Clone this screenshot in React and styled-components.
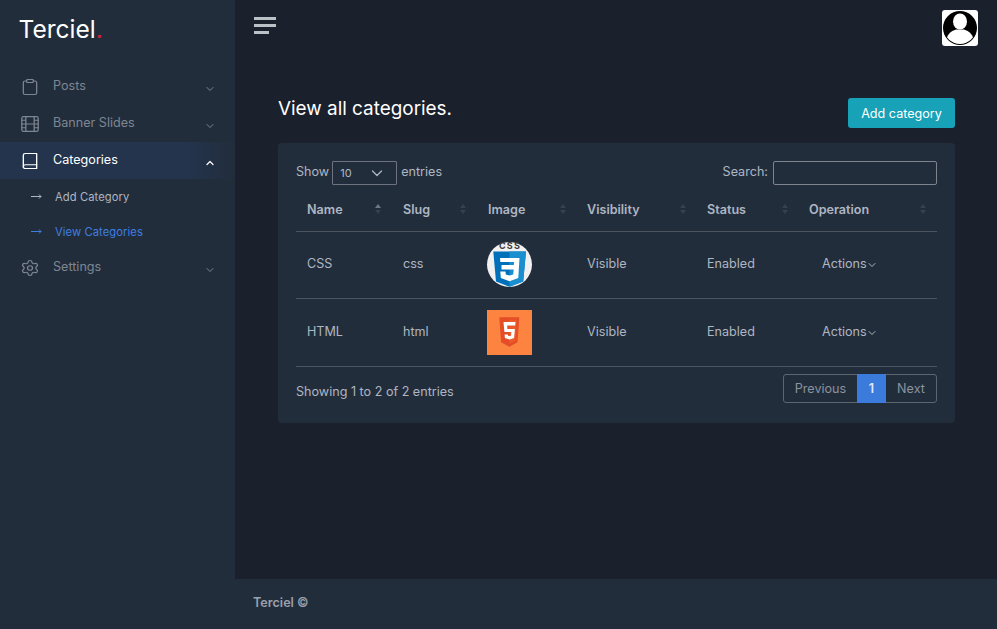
import React from "react";
import styled, { createGlobalStyle } from "styled-components";
import { Settings } from "lucide-react";

const Global = createGlobalStyle`
  html, body { margin: 0; padding: 0; height: 100%; background: #1a212d; }
  body { font-family: Inter, "Liberation Sans", sans-serif; font-size: 12.6px; color: #aeb6c2; overflow: hidden; }
  * { box-sizing: border-box; }
`;

const Shell = styled.div`display: flex; height: 629px; width: 997px;`;
const Sidebar = styled.aside`width: 235px; flex: none; background: #222d3c; display: flex; flex-direction: column;`;
const Logo = styled.div`
  height: 60px; padding: 13px 0 0 18.5px; font-size: 24.5px; line-height: 32px; color: #fff;
  span { color: #d0223f; }
`;
const Menu = styled.nav`display: flex; flex-direction: column; padding-top: 8px;`;
const MenuItem = styled.div`
  height: 37px; display: flex; align-items: center; padding: 0 21px 2px 20px; gap: 13px;
  font-size: 12.6px; color: ${p => (p.$active ? "#fff" : "#7e8691")};
  background: ${p => (p.$active ? "linear-gradient(90deg, #23344c 0%, #23344c 80%, #222d3c 100%)" : "transparent")};
  svg.main { width: 20px; height: 18px; flex: none; margin-top: 2px; }
`;
const Label = styled.span`flex: 1;`;
const Caret = styled.svg`width: 8px; height: 8px; margin-top: 7px; flex: none;`;
const ActionCaret = styled(Caret)`margin-top: 2px;`;
const SubItem = styled.div`
  height: 35px; display: flex; align-items: center; padding: 0 0 0 31px; gap: 13px;
  font-size: 11.2px; letter-spacing: .08px; color: ${p => (p.$active ? "#3f7ee0" : "#aeb6c2")};
`;
const Main = styled.div`flex: 1; display: flex; flex-direction: column; min-width: 0;`;
const TopBar = styled.header`height: 54px; flex: none; display: flex; align-items: center; justify-content: space-between; padding: 0 19px 0 19px;`;
const Burger = styled.div`
  width: 22px; display: flex; flex-direction: column; gap: 4.5px; margin-top: -3px;
  i { display: block; height: 2.5px; background: #bcc0c7; }
  i:last-child { width: 15px; }
`;
const Avatar = styled.div`width: 36px; height: 36px; border-radius: 3px; background: #fff; margin-top: 1px; padding: 1px; svg { display: block; }`;
const Content = styled.main`flex: 1; padding: 44px 42px 0 43px;`;
const TitleRow = styled.div`display: flex; justify-content: space-between; align-items: flex-start; height: 45px;`;
const Title = styled.h1`margin: 0; font-size: 18.9px; line-height: 22px; font-weight: 400; color: #fff;`;
const PrimaryButton = styled.button`
  width: 107px; height: 30px; border: 0; border-radius: 3px; background: #17a2b8; color: #fff;
  font: 400 12.6px Inter, sans-serif; padding: 0;
`;
const Card = styled.section`background: #222d3c; border-radius: 4px; padding: 18px 18px 20px; height: 280px;`;
const Controls = styled.div`display: flex; justify-content: space-between; align-items: flex-start; height: 24px; line-height: 22px;`;
const Field = styled.label`display: flex; align-items: flex-start; gap: 3px;`;
const FakeSelect = styled.div`
  width: 65px; height: 24px; border: 1px solid #6d7480; display: flex; align-items: center; justify-content: space-between;
  padding: 0 13px 1px 7px; margin-right: 1px; font-size: 11px; border-radius: 1px;
`;
const SearchBox = styled.div`width: 164px; height: 24px; border: 1px solid #7d848e; border-radius: 2px; margin-left: 2px;`;
const Table = styled.table`width: 641px; table-layout: fixed; border-collapse: collapse; margin-top: 2px;`;
const Th = styled.th`
  height: 44px; padding: 2px 11px 0 ${p => p.$pl}px; text-align: left; font-size: 12.6px; font-weight: 600; color: #aeb6c2;
  border-bottom: 1px solid #4c5560; width: ${p => p.$w}px;
`;
const ThInner = styled.div`display: flex; justify-content: space-between; align-items: center;`;
const Sort = styled.span`
  display: flex; flex-direction: column; gap: 2px; margin-top: -2px;
  i { display: block; width: 0; height: 0; border: 3px solid transparent; border-top-width: 0; border-bottom: 4px solid #36404e; }
  i:last-child { border-bottom: 0; border-top: 4px solid #36404e; }
  &[data-on] i:first-child { border-bottom-color: #6f7783; }
`;
const Td = styled.td`
  padding: ${p => p.$pt}px 10px ${p => p.$pb}px ${p => p.$pl ?? 10}px; line-height: 20px; color: #aeb6c2; border-bottom: 1px solid #4c5560;
  svg { display: block; }
`;
const Actions = styled.span`display: inline-flex; align-items: center; gap: 1px; margin-left: 13px;`;
const Footerline = styled.div`display: flex; justify-content: space-between; align-items: flex-start; margin-top: 7px;`;
const Entries = styled.span`margin-top: 10px;`;
const Pager = styled.div`display: flex; height: 29px; border: 1px solid #5c6570; border-radius: 3px; align-items: stretch; color: #8a929d;`;
const Page = styled.span`
  display: flex; align-items: center; justify-content: center; width: ${p => p.$w}px;
  ${p => p.$on && "background:#3a7bdc;color:#dfe8f6;font-weight:600;margin:-1px 0;"}
`;
const Foot = styled.footer`height: 50px; flex: none; background: #222d3c; display: flex; align-items: center; padding: 0 18px 3px; font-weight: 600; font-size: 12.6px; color: #99a1ad;`;

const stroke = { fill: "none", stroke: "currentColor", strokeWidth: 2, strokeLinecap: "round", strokeLinejoin: "round" };
const Clip = () => <svg className="main" viewBox="0 0 24 24" preserveAspectRatio="none" {...stroke} strokeWidth="1.5"><path d="M16 4h2a2 2 0 0 1 2 2v14a2 2 0 0 1-2 2H6a2 2 0 0 1-2-2V6a2 2 0 0 1 2-2h2"/><rect x="8" y="2" width="8" height="4" rx="1"/></svg>;
const Film = () => <svg className="main" viewBox="0 0 24 24" preserveAspectRatio="none" {...stroke} strokeWidth="1.5"><rect x="2.18" y="2.18" width="19.64" height="19.64" rx="2.18"/><path d="M7 2v20M17 2v20M2 12h20M2 7h5M2 17h5M17 17h5M17 7h5"/></svg>;
const Book = () => <svg className="main" viewBox="0 0 24 24" preserveAspectRatio="none" {...stroke} strokeWidth="1.6"><path d="M4 19.5A2.5 2.5 0 0 1 6.5 17H20"/><path d="M6.5 2H20v20H6.5A2.5 2.5 0 0 1 4 19.5v-15A2.5 2.5 0 0 1 6.5 2z"/></svg>;
const Arrow = () => <svg width="11" height="7" viewBox="0 0 11 7" fill="none" stroke="currentColor" strokeWidth="1"><path d="M0 3.5h10M8 1.5l2 2-2 2"/></svg>;
const Down = () => <Caret viewBox="0 0 8 8" {...stroke} strokeWidth="1"><path d="M1 2.5l3 3 3-3"/></Caret>;
const Up = () => <Caret viewBox="0 0 8 8" {...stroke} strokeWidth="1.2"><path d="M1 5.5l3-3 3 3"/></Caret>;

const CssLogo = () => (
  <svg width="45" height="45" viewBox="0 0 45 45" overflow="visible">
    <circle cx="22.5" cy="22.5" r="22.5" fill="#f1f1f1" />
    <path d="M6.300 9.500h32.700l-2.800 30-13.700 5.200-13.500-5.200z" fill="#0170ba" />
    <path d="M22.500 9.500H39l-2.800 30-13.700 5.200z" fill="#1b8ed0" />
    <path d="M13 16h19.500l-1.200 20-8.800 3.200-8.700-3.200-.5-6.500h5.200l.3 3 3.700 1 3.700-1 .5-5H14.500v-4.500h12.300l.4-3H13.300z" fill="#fff" />
    <text x="23" y="7.200" textAnchor="middle" fontFamily="Inter, sans-serif" fontSize="9" fontWeight="700" letterSpacing="1.200" fill="#3a3a3a">CSS</text>
  </svg>
);
const HtmlLogo = () => (
  <svg width="45" height="45" viewBox="0 0 45 45">
    <rect width="45" height="45" fill="#fc8340" />
    <path d="M12.300 7.300h20l-1.800 25-8.200 4.400-8.200-4.400z" fill="#e44d26" />
    <path d="M22.300 9.500h7.700l-1.500 21-6.200 3.400z" fill="#ea5a2a" />
    <path d="M16.500 12h12l-.3 3.500h-8l.2 3.500h7.500l-.8 9-4.600 1.500-4.600-1.500-.3-3.500h3.300l.1 1.200 1.500.4 1.600-.4.200-3.700h-6.900z" fill="#fff" />
  </svg>
);
const Person = () => (
  <svg width="34" height="34" viewBox="0 0 34 34">
    <defs><clipPath id="c"><circle cx="17" cy="17" r="16" /></clipPath></defs>
    <circle cx="17" cy="17" r="17" fill="#000" />
    <g clipPath="url(#c)">
      <ellipse cx="17" cy="10.500" rx="7" ry="8" fill="#fff" />
      <path d="M3 32c0-8 5-12 10-13.500h8c5 1.500 10 5.500 10 13.500v2H3z" fill="#fff" />
    </g>
  </svg>
);

const cols = [["Name", 96, 11], ["Slug", 85, 11], ["Image", 100, 11], ["Visibility", 120, 10], ["Status", 102, 10], ["Operation", 138, 10]];
const rows = [
  { name: "CSS", slug: "css", logo: <CssLogo />, pt: 10, pb: 12 },
  { name: "HTML", slug: "html", logo: <HtmlLogo />, pt: 11, pb: 11 },
];

export default function App() {
  return (
    <Shell>
      <Global />
      <Sidebar>
        <Logo>Terciel<span>.</span></Logo>
        <Menu>
          <MenuItem><Clip /><Label>Posts</Label><Down /></MenuItem>
          <MenuItem><Film /><Label>Banner Slides</Label><Down /></MenuItem>
          <MenuItem $active><Book /><Label>Categories</Label><Up /></MenuItem>
          <SubItem><Arrow />Add Category</SubItem>
          <SubItem $active><Arrow />View Categories</SubItem>
          <MenuItem><Settings className="main" preserveAspectRatio="none" strokeWidth={1.5} /><Label>Settings</Label><Down /></MenuItem>
        </Menu>
      </Sidebar>
      <Main>
        <TopBar>
          <Burger><i /><i /><i /></Burger>
          <Avatar><Person /></Avatar>
        </TopBar>
        <Content>
          <TitleRow>
            <Title>View all categories.</Title>
            <PrimaryButton>Add category</PrimaryButton>
          </TitleRow>
          <Card>
            <Controls>
              <Field>Show <FakeSelect>10<svg width="12" height="12" viewBox="0 0 12 12" {...stroke} strokeWidth="1.300"><path d="M1.500 4l4.500 4.500L10.500 4"/></svg></FakeSelect> entries</Field>
              <Field>Search: <SearchBox /></Field>
            </Controls>
            <Table>
              <thead>
                <tr>
                  {cols.map(([c, w, pl], i) => (
                    <Th key={c} $w={w} $pl={pl}>
                      <ThInner>{c}<Sort data-on={i === 0 ? "" : undefined}><i /><i /></Sort></ThInner>
                    </Th>
                  ))}
                </tr>
              </thead>
              <tbody>
                {rows.map(r => (
                  <tr key={r.name}>
                    <Td $pl={11} $pt={r.pt} $pb={r.pb}>{r.name}</Td>
                    <Td $pl={11} $pt={r.pt} $pb={r.pb}>{r.slug}</Td>
                    <Td $pt={r.pt} $pb={11}>{r.logo}</Td>
                    <Td $pt={r.pt} $pb={r.pb}>Visible</Td>
                    <Td $pt={r.pt} $pb={r.pb}>Enabled</Td>
                    <Td $pt={r.pt} $pb={r.pb}><Actions>Actions<ActionCaret viewBox="0 0 8 8" {...stroke} strokeWidth="1"><path d="M1 2.500l3 3 3-3"/></ActionCaret></Actions></Td>
                  </tr>
                ))}
              </tbody>
            </Table>
            <Footerline>
              <Entries>Showing 1 to 2 of 2 entries</Entries>
              <Pager>
                <Page $w={73}>Previous</Page>
                <Page $w={29} $on>1</Page>
                <Page $w={50}>Next</Page>
              </Pager>
            </Footerline>
          </Card>
        </Content>
        <Foot>Terciel ©</Foot>
      </Main>
    </Shell>
  );
}
